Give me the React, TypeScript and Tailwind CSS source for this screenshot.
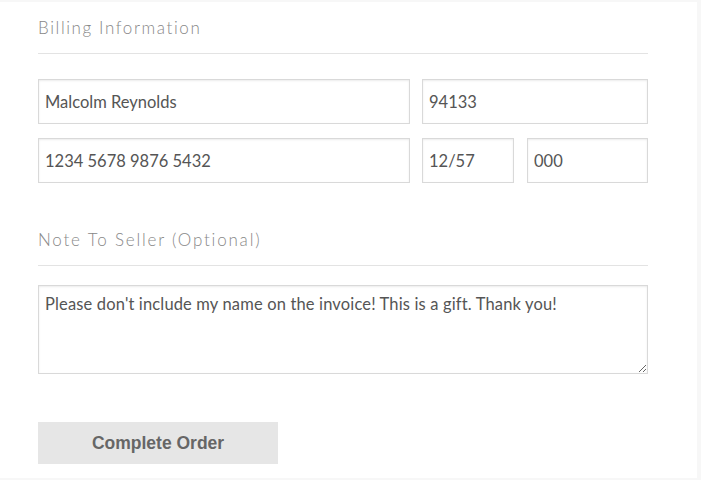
import React from "react";

const inputCls =
  "h-[45px] border border-[#d9d9d9] bg-white px-[6px] text-[16.5px] text-[#555] outline-none shadow-[inset_0_1px_2px_rgba(0,0,0,0.08)] [font-family:Lato,'Open_Sans',sans-serif]";

export default function App() {
  return (
    <div className="h-[480px] w-[701px] bg-[#f7f7f7] pt-[2px]">
      <div className="h-[476px] w-[697px] bg-white pl-[38px]">
        <div className="w-[610px]">
          <div className="flex h-[52px] items-center border-b border-[#e3e3e3] text-[17px] font-light tracking-[1.6px] text-[#888] [font-family:Lato,sans-serif]">
            Billing Information
          </div>
          <div className="mt-[25px] flex gap-[12px]">
            <input className={`${inputCls} w-[372px]`} defaultValue="Malcolm Reynolds" />
            <input className={`${inputCls} w-[226px]`} defaultValue="94133" />
          </div>
          <div className="mt-[14px] flex gap-[12px]">
            <input className={`${inputCls} w-[372px]`} defaultValue="1234 5678 9876 5432" />
            <input className={`${inputCls} w-[92px]`} defaultValue="12/57" />
            <input className={`${inputCls} ml-[1px] w-[121px]`} defaultValue="000" />
          </div>
          <div className="mt-[31px] flex h-[52px] items-center border-b border-[#e3e3e3] text-[17px] font-light tracking-[1.8px] text-[#888] [font-family:Lato,sans-serif]">
            Note To Seller (Optional)
          </div>
          <textarea
            className="mt-[19px] block h-[89px] w-[610px] border border-[#d9d9d9] px-[6px] py-[6px] text-[16.5px] tracking-[0.15px] text-[#555] outline-none shadow-[inset_0_1px_2px_rgba(0,0,0,0.08)] [font-family:Lato,sans-serif]"
            defaultValue="Please don't include my name on the invoice! This is a gift. Thank you!"
          />
          <button className="mt-[48px] flex h-[42px] w-[240px] items-center justify-center bg-[#e6e6e6] text-[17.5px] font-bold text-[#666] [font-family:'Liberation_Sans',Arial,sans-serif]">
            Complete Order
          </button>
        </div>
      </div>
    </div>
  );
}
